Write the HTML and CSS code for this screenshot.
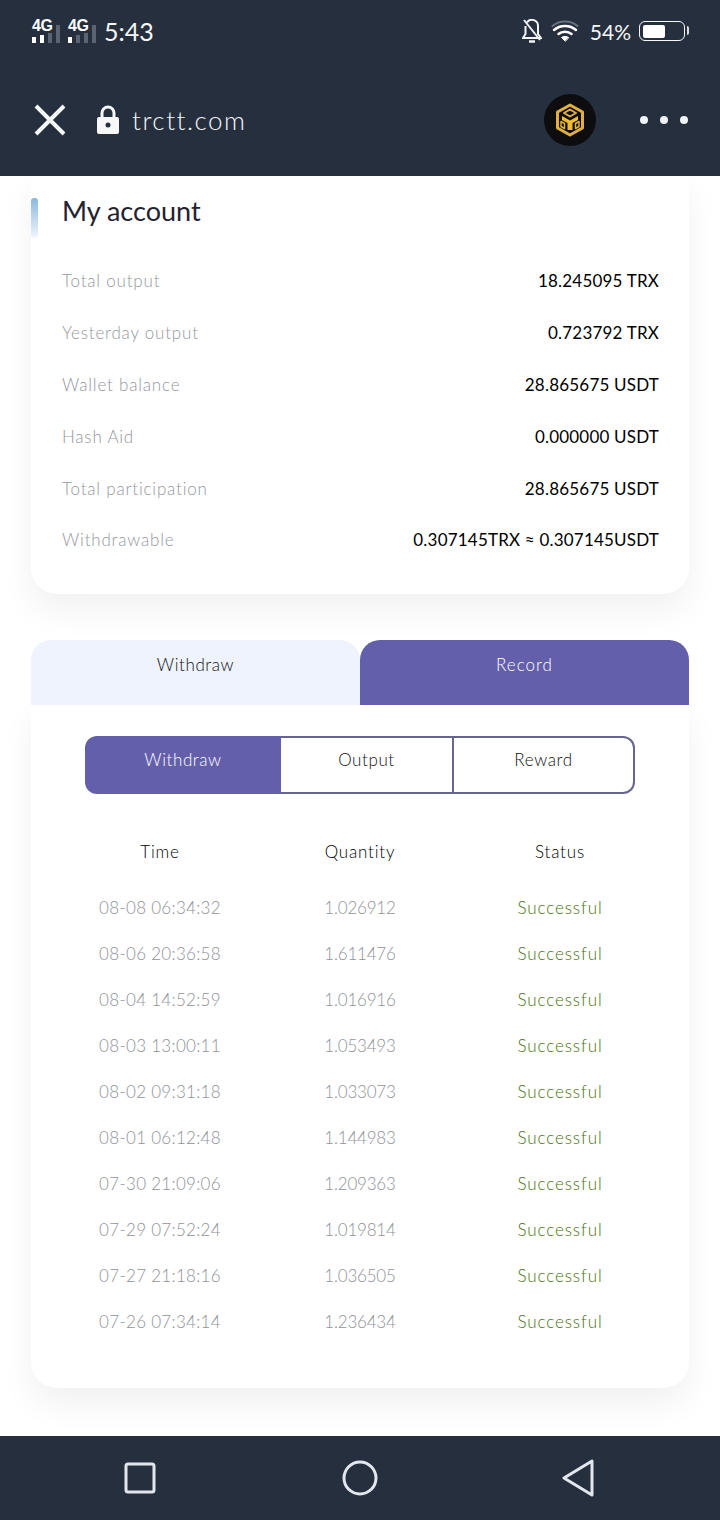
FILE: index.html
```html
<!DOCTYPE html>
<html lang="en">
<head>
    <meta charset="UTF-8">
    <meta name="viewport" content="width=device-width, initial-scale=1.0">
    <title>trctt.com</title>
    <link rel="stylesheet" href="styles.css">
</head>
<body>

<div class="page">
    <header class="top">
        <div class="status">
            <div class="status-left">
                <span class="signal"><b>4G</b><svg width="30" height="18" viewBox="0 0 30 18"><rect x="0" y="12" width="4" height="6" fill="#fff"/><rect x="8" y="10" width="4" height="8" fill="#fff"/><rect x="16" y="8" width="4" height="10" fill="#5b6470"/><rect x="24" y="0" width="4" height="18" fill="#5b6470"/></svg></span>
                <span class="signal"><b>4G</b><svg width="30" height="18" viewBox="0 0 30 18"><rect x="0" y="12" width="4" height="6" fill="#fff"/><rect x="8" y="10" width="4" height="8" fill="#5b6470"/><rect x="16" y="8" width="4" height="10" fill="#5b6470"/><rect x="24" y="0" width="4" height="18" fill="#5b6470"/></svg></span>
                <span class="clock">5:43</span>
            </div>
            <div class="status-right">
                <svg class="bell" width="20" height="24" viewBox="0 0 20 24" fill="none" stroke="#f2f4f6" stroke-width="2"><path d="M5 3.500 A6 6 0 0 1 16 7 V15 L19 19 H1 L3.500 15 V7"/><path d="M7 22.500 H13" stroke-width="2.500"/><path d="M2 1 L18 21"/></svg>
                <svg class="wifi" width="28" height="22" viewBox="0 0 28 22" fill="none" stroke-linecap="round"><path d="M1.500 6 C8 0 20 0 26.500 6" stroke="#69717c" stroke-width="2"/><path d="M3 10 C9 4.500 19 4.500 25 10" stroke="#fff" stroke-width="2.500"/><path d="M7.500 14 C11 11 17 11 20.500 14" stroke="#fff" stroke-width="2.500"/><path d="M14 21 L10.500 17.500 C12.500 16 15.500 16 17.500 17.500 Z" fill="#fff" stroke="#fff"/></svg>
                <span class="pct">54%</span>
                <span class="battery"><span class="battery-fill"></span></span>
            </div>
        </div>
        <div class="navbar">
            <svg class="close" width="34" height="34" viewBox="0 0 34 34" stroke="#f6f8f8" stroke-width="4"><path d="M3 3 L31 31 M31 3 L3 31"/></svg>
            <svg class="lock" width="24" height="30" viewBox="0 0 24 30"><path d="M6 13 V8 A6 6 0 0 1 18 8 V13" fill="none" stroke="#f6f8f8" stroke-width="3"/><rect x="1" y="12" width="22" height="17" rx="2" fill="#f6f8f8"/><circle cx="12" cy="20" r="2.500" fill="#262f3e"/></svg>
            <span class="host">trctt.com</span>
            <span class="bnb">
                <svg width="30" height="34" viewBox="0 0 30 34" fill="none" stroke="#e0af3c" stroke-width="3" stroke-linejoin="round">
                    <path d="M15 2 L27.500 9 V25 L15 32 L2.500 25 V9 Z"/>
                    <path d="M15 6.500 L21 10 L15 13.500 L9 10 Z" stroke-width="2"/>
                    <path d="M7 13 L15 17.500 L23 13 V17 L17.500 20 V27 H12.500 V20 L7 17 Z" fill="#f3ba2f" stroke="none"/>
                    <path d="M6 18.500 V23.500 L9.500 25.500 V20.500 Z M24 18.500 V23.500 L20.500 25.500 V20.500 Z" stroke-width="1.500"/>
                </svg>
            </span>
            <span class="dots"><i></i><i></i><i></i></span>
        </div>
    </header>

    <main class="content">
        <section class="card account">
            <h2 class="card-title">My account</h2>
            <div class="row"><span>Total output</span><strong>18.245095 TRX</strong></div>
            <div class="row"><span>Yesterday output</span><strong>0.723792 TRX</strong></div>
            <div class="row"><span>Wallet balance</span><strong>28.865675 USDT</strong></div>
            <div class="row"><span>Hash Aid</span><strong>0.000000 USDT</strong></div>
            <div class="row"><span>Total participation</span><strong>28.865675 USDT</strong></div>
            <div class="row"><span>Withdrawable</span><strong>0.307145TRX ≈ 0.307145USDT</strong></div>
        </section>

        <div class="tabs">
            <div class="tab">Withdraw</div>
            <div class="tab active">Record</div>
        </div>

        <section class="card record">
            <div class="segment">
                <div class="seg seg-1 active">Withdraw</div>
                <div class="seg seg-2">Output</div>
                <div class="seg seg-3">Reward</div>
            </div>
            <table class="table">
                <thead>
                    <tr><th>Time</th><th>Quantity</th><th>Status</th></tr>
                </thead>
                <tbody>
                    <tr><td>08-08 06:34:32</td><td>1.026912</td><td class="ok">Successful</td></tr>
                    <tr><td>08-06 20:36:58</td><td>1.611476</td><td class="ok">Successful</td></tr>
                    <tr><td>08-04 14:52:59</td><td>1.016916</td><td class="ok">Successful</td></tr>
                    <tr><td>08-03 13:00:11</td><td>1.053493</td><td class="ok">Successful</td></tr>
                    <tr><td>08-02 09:31:18</td><td>1.033073</td><td class="ok">Successful</td></tr>
                    <tr><td>08-01 06:12:48</td><td>1.144983</td><td class="ok">Successful</td></tr>
                    <tr><td>07-30 21:09:06</td><td>1.209363</td><td class="ok">Successful</td></tr>
                    <tr><td>07-29 07:52:24</td><td>1.019814</td><td class="ok">Successful</td></tr>
                    <tr><td>07-27 21:18:16</td><td>1.036505</td><td class="ok">Successful</td></tr>
                    <tr><td>07-26 07:34:14</td><td>1.236434</td><td class="ok">Successful</td></tr>
                </tbody>
            </table>
        </section>
    </main>

    <footer class="bottom">
        <svg width="32" height="32" viewBox="0 0 32 32" fill="none" stroke="#e3e8ef" stroke-width="3"><rect x="2" y="2" width="28" height="28" rx="2"/></svg>
        <svg width="36" height="36" viewBox="0 0 36 36" fill="none" stroke="#e3e8ef" stroke-width="3"><circle cx="18" cy="18" r="16"/></svg>
        <svg class="back" width="34" height="38" viewBox="0 0 34 38" fill="none" stroke="#e3e8ef" stroke-width="3" stroke-linejoin="round"><path d="M31 2 V36 L3 19 Z"/></svg>
    </footer>
</div>

</body>
</html>
```

FILE: styles.css
```css
body {
    font-family: Lato, 'Open Sans', sans-serif;
    margin: 0;
    padding: 0;
    background-color: #ffffff;
    color: #111;
}
.page {
    width: 720px;
    height: 1520px;
    display: flex;
    flex-direction: column;
    overflow: hidden;
}

/* status bar + browser bar */
.top {
    height: 176px;
    flex: none;
    background-color: #262f3e;
    color: #f6f8f8;
    position: relative;
    z-index: 1;
}
.status {
    height: 62px;
    display: flex;
    align-items: center;
    justify-content: space-between;
    padding: 0 35px 0 32px;
}
.status-left, .status-right {
    display: flex;
    align-items: center;
}
.signal {
    width: 36px;
    height: 24px;
    display: flex;
    align-items: flex-end;
    position: relative;
}
.signal b {
    position: absolute;
    left: 0;
    top: -1px;
    font-family: 'Liberation Sans', sans-serif;
    font-size: 16px;
    line-height: 16px;
    letter-spacing: -0.500px;
    color: #ffffff;
}
.signal svg {
    display: block;
}
.clock {
    font-size: 25px;
    margin-left: 0;
}
.bell {
    margin-right: 9px;
}
.wifi {
    margin-right: 11px;
}
.pct {
    font-size: 21px;
    margin-right: 8px;
}
.battery {
    width: 46px;
    height: 20px;
    box-sizing: border-box;
    border: 1.500px solid #f6f8f8;
    border-radius: 6px;
    padding: 2.500px;
    display: block;
    position: relative;
}
.battery::after {
    content: "";
    position: absolute;
    right: -5px;
    top: 4px;
    width: 2px;
    height: 9px;
    border-radius: 0 2px 2px 0;
    background-color: #d8dbdf;
}
.battery-fill {
    display: block;
    width: 22px;
    height: 100%;
    background-color: #fff;
    border-radius: 2px;
}
.navbar {
    height: 114px;
    display: flex;
    align-items: center;
    padding: 0 32px 0 33px;
    margin-top: 1px;
}
.lock {
    margin-left: 29px;
}
.host {
    font-size: 26px;
    font-weight: 300;
    letter-spacing: 1.500px;
    margin-left: 12px;
}
.bnb {
    width: 52px;
    height: 52px;
    border-radius: 50%;
    background-color: #0d0d10;
    display: flex;
    align-items: center;
    justify-content: center;
    margin-left: auto;
    margin-right: 1px;
}
.dots {
    display: flex;
    gap: 12px;
    margin-left: 43px;
}
.dots i {
    width: 8px;
    height: 8px;
    border-radius: 50%;
    background-color: #f0f4f8;
}

/* content */
.content {
    flex: 1;
    padding: 0 31px;
}
.card {
    background: #ffffff;
    border-radius: 0 0 26px 26px;
    box-shadow: 0 16px 34px rgba(0, 0, 0, 0.06);
}
.account {
    height: 418px;
    padding: 0 30px 0 31px;
    box-sizing: border-box;
    position: relative;
}
.account::before {
    content: "";
    position: absolute;
    left: 0;
    top: 22px;
    width: 7px;
    height: 40px;
    border-radius: 3px;
    background: linear-gradient(#8ab8de, #f0f6fb);
}
.card-title {
    margin: 0;
    padding-top: 19px;
    height: 79px;
    box-sizing: border-box;
    font-size: 27px;
    font-weight: 400;
    color: #24222e;
    line-height: 32px;
}
.row {
    height: 51.800px;
    display: flex;
    align-items: center;
    justify-content: space-between;
    font-size: 17px;
}
.row span {
    color: #94979d;
    font-weight: 300;
    letter-spacing: 0.800px;
}
.row strong {
    font-weight: 400;
    color: #000;
    font-size: 17px;
    letter-spacing: 0.200px;
}
.tabs {
    display: flex;
    margin-top: 46px;
}
.tab {
    flex: 1;
    height: 65px;
    line-height: 50px;
    text-align: center;
    font-size: 17px;
    font-weight: 300;
    letter-spacing: 0.600px;
    background-color: #eef3fd;
    border-radius: 20px 20px 0 0;
}
.tab.active {
    background-color: #635fab;
    color: #ffffff;
    letter-spacing: 1px;
}
.record {
    height: 683px;
    padding-top: 31px;
    box-sizing: border-box;
}
.segment {
    width: 550px;
    height: 58px;
    margin: 0 auto;
    display: flex;
}
.seg {
    text-align: center;
    line-height: 44px;
    font-size: 17px;
    font-weight: 300;
    letter-spacing: 0.600px;
    box-sizing: border-box;
    border: solid #66658f;
    border-width: 2px 2px 2px 0;
}
.seg-1 {
    width: 196px;
    border-radius: 12px 0 0 12px;
    border-width: 0;
    line-height: 48px;
}
.seg-2 {
    width: 173px;
}
.seg-3 {
    flex: 1;
    border-radius: 0 12px 12px 0;
}
.seg.active {
    background-color: #635fab;
    color: #ffffff;
}
.table {
    width: 600px;
    margin: 34px auto 0 auto;
    border-collapse: collapse;
    table-layout: fixed;
    font-size: 17px;
}
.table th, .table td {
    padding: 0;
    text-align: center;
    font-weight: 300;
    height: 46px;
}
.table th {
    color: #000;
    height: 46px;
    padding-bottom: 10px;
    letter-spacing: 0.800px;
}
.table td {
    color: #8f9298;
    letter-spacing: 0.300px;
}
.table td:nth-child(2) {
    letter-spacing: -0.200px;
}
.table td.ok {
    color: #47720c;
    letter-spacing: 0.900px;
}

/* android nav buttons */
.bottom {
    height: 84px;
    flex: none;
    background-color: #262f3e;
    display: grid;
    grid-template-columns: 280px 160px 280px;
    align-items: center;
    justify-items: center;
}
.back {
    margin-right: 5px;
}
```
